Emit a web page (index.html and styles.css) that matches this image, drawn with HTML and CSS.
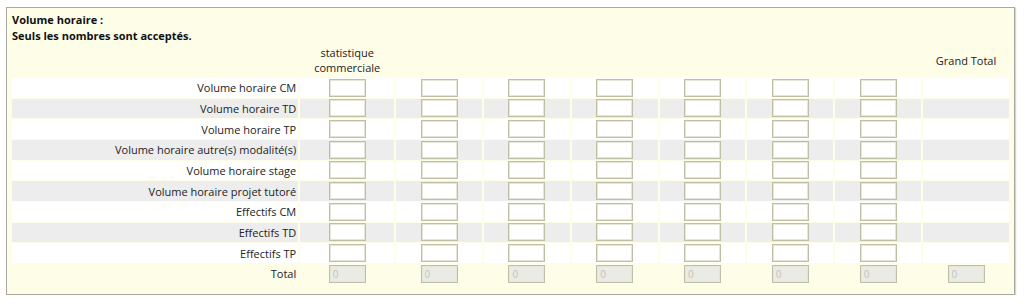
FILE: index.html
```html
<!DOCTYPE html>
<html lang="fr">
<head>
    <meta charset="UTF-8">
    <title>Volume horaire</title>
    <link rel="stylesheet" href="styles.css">
</head>
<body>
    <div class="panel">
        <p class="intro">Volume horaire :<br>Seuls les nombres sont acceptés.</p>

        <table class="grid">
            <colgroup>
                <col class="col-label">
                <col class="col-first">
                <col class="col-data"><col class="col-data"><col class="col-data">
                <col class="col-data"><col class="col-data"><col class="col-data">
                <col class="col-data">
            </colgroup>
            <thead>
                <tr>
                    <th></th>
                    <th>statistique<br>commerciale</th>
                    <th></th><th></th><th></th><th></th><th></th><th></th>
                    <th>Grand Total</th>
                </tr>
            </thead>
            <tbody id="rows"></tbody>
            <tfoot>
                <tr class="total">
                    <td class="label">Total</td>
                    <td><input type="text" value="0" disabled></td>
                    <td><input type="text" value="0" disabled></td>
                    <td><input type="text" value="0" disabled></td>
                    <td><input type="text" value="0" disabled></td>
                    <td><input type="text" value="0" disabled></td>
                    <td><input type="text" value="0" disabled></td>
                    <td><input type="text" value="0" disabled></td>
                    <td><input type="text" value="0" disabled></td>
                </tr>
            </tfoot>
        </table>
    </div>

    <script>
        // build the input rows
        const labels = [
            'Volume horaire CM',
            'Volume horaire TD',
            'Volume horaire TP',
            'Volume horaire autre(s) modalité(s)',
            'Volume horaire stage',
            'Volume horaire projet tutoré',
            'Effectifs CM',
            'Effectifs TD',
            'Effectifs TP'
        ];
        const body = document.getElementById('rows');

        labels.forEach((text, i) => {
            const tr = document.createElement('tr');
            tr.className = i % 2 ? 'odd' : 'even';
            let html = '<td class="label">' + text + '</td>';
            for (let c = 0; c < 7; c++) {
                html += '<td><input type="text"></td>';
            }
            html += '<td></td>'; // grand total stays empty
            tr.innerHTML = html;
            body.appendChild(tr);
        });
    </script>
</body>
</html>
```

FILE: styles.css
```css
body {
    margin: 0;
    padding: 7px 0 0 6px;
    font-family: "Open Sans", Arial, sans-serif;
    font-size: 11px;
    color: #222;
    background: #fff;
}

.panel {
    width: 1009px;
    height: 288px;
    box-sizing: border-box;
    padding: 4px 3px 12px 3px;
    background-color: #fefde8;
    border: 1px solid #a9a9a2;
    box-shadow: 1px 1px 1px #d4d4cc;
}

.intro {
    margin: 0 0 0 2px;
    font-weight: bold;
    line-height: 16px;
    color: #111;
}

.grid {
    table-layout: fixed;
    border-collapse: separate;
    border-spacing: 2px 1px;
    margin-top: -1px;
}

.col-label { width: 287px; }
.col-first { width: 94px; }
.col-data { width: 86px; }

.grid th {
    font-weight: normal;
    line-height: 15px;
    padding: 1px 0 2px;
    text-align: center;
    vertical-align: middle;
}

.grid td {
    height: 19.67px;
    padding: 0;
    text-align: center;
    vertical-align: middle;
}

.grid td.label {
    text-align: right;
    padding-right: 2px;
}

.even td { background-color: #fff; }
.odd td { background-color: #ededed; }

.grid input {
    display: block;
    margin: 0 auto;
    width: 37px;
    height: 18px;
    box-sizing: border-box;
    padding: 0 3px;
    border: 1px solid #bfbfa6;
    box-shadow: inset 0 0 0 1px #e6e6d8;
    background-color: #fff;
    font-family: inherit;
    font-size: 10px;
}

.grid input:disabled {
    background-color: #ebebe6;
    color: #c2c2b8;
}

.total td { background: transparent; }
```
